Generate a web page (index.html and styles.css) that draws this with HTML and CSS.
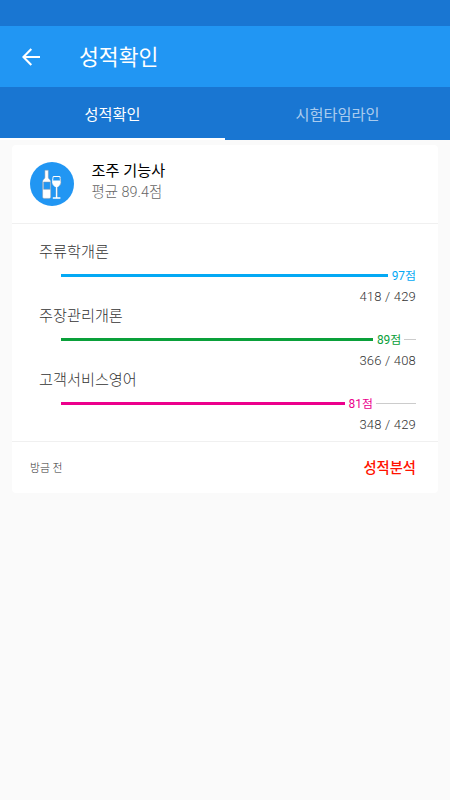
FILE: index.html
```html
<!DOCTYPE html>
<html lang="ko">
<head>
    <meta charset="UTF-8">
    <meta name="viewport" content="width=device-width, initial-scale=1.0">
    <title>성적확인</title>
    <link rel="stylesheet" href="styles.css">
</head>
<body>
    <div class="status-bar"></div>

    <header class="app-bar">
        <a href="#" class="back" aria-label="뒤로">
            <svg width="18" height="18" viewBox="0 0 18 18" fill="none" stroke="#fff" stroke-width="2.1">
                <path d="M18 9H1.5M9.3 .9L1.4 9l7.9 8.1"/>
            </svg>
        </a>
        <h1>성적확인</h1>
    </header>

    <nav class="tabs">
        <a href="#" class="tab active">성적확인</a>
        <a href="#" class="tab">시험타임라인</a>
    </nav>

    <main class="card">
        <div class="card-header">
            <svg class="badge" width="44" height="44" viewBox="0 0 44 44">
                <circle cx="22" cy="22" r="22" fill="#2196f3"/>
                <path d="M14.9 8.2h3.4v7.3c0 1.5 2.4 2 2.4 4.2v15.1c0 1-.5 1.6-1.5 1.6h-5.1c-1 0-1.5-.6-1.5-1.6V19.7c0-2.2 2.3-2.7 2.3-4.2z" fill="#fff" stroke="#8b9bab" stroke-width=".5"/>
                <path d="M13.6 20h6.6v7.3h-6.6z" fill="#2196f3" stroke="#8b9bab" stroke-width=".5"/>
                <path d="M23.2 14.5h6.7c1 5 1.2 9.8-3.4 10.1-4.5-.3-4.3-5.1-3.3-10.1z" fill="#2196f3" stroke="#fff" stroke-width="1"/>
                <path d="M22.8 18.5h7.6c.2 3.5-.7 5.9-3.9 6.1-3.2-.2-4-2.6-3.7-6.1z" fill="#fff"/>
                <path d="M26.6 24v11.4M22.8 36h7.6" fill="none" stroke="#fff" stroke-width="1.5"/>
                <path d="M27.4 25.2v9.6M30.4 16l.6 5-1.4 3" fill="none" stroke="#8b9bab" stroke-width=".5"/>
            </svg>
            <div class="exam">
                <h2>조주 기능사</h2>
                <p>평균 89.4점</p>
            </div>
        </div>

        <div class="subjects">
            <section class="subject blue">
                <h3>주류학개론</h3>
                <div class="progress">
                    <span class="reached" style="width: calc(97% - 4px)"></span>
                    <span class="score">97점</span>
                    <span class="rest"></span>
                </div>
                <p class="count">418 / 429</p>
            </section>
            <section class="subject green">
                <h3>주장관리개론</h3>
                <div class="progress">
                    <span class="reached" style="width: calc(89% - 4px)"></span>
                    <span class="score">89점</span>
                    <span class="rest"></span>
                </div>
                <p class="count">366 / 408</p>
            </section>
            <section class="subject pink">
                <h3>고객서비스영어</h3>
                <div class="progress">
                    <span class="reached" style="width: calc(81% - 4px)"></span>
                    <span class="score">81점</span>
                    <span class="rest"></span>
                </div>
                <p class="count">348 / 429</p>
            </section>
        </div>

        <footer class="card-footer">
            <span class="time">방금 전</span>
            <a href="#" class="analysis">성적분석</a>
        </footer>
    </main>
</body>
</html>
```

FILE: styles.css
```css
:root {
    --primary: #2196f3;
    --primary-dark: #1976d2;
    --background: #fafafa;
    --divider: #f0f0f0;
}

* {
    margin: 0;
    padding: 0;
    box-sizing: border-box;
}

body {
    font-family: Roboto, "Noto Sans CJK KR", sans-serif;
    background: var(--background);
    color: #212121;
    min-height: 100vh;
}

a {
    text-decoration: none;
}

.status-bar {
    height: 26px;
    background: var(--primary-dark);
}

.app-bar {
    height: 61px;
    padding-left: 22px;
    display: flex;
    align-items: center;
    background: var(--primary);
    color: #fff;
}

.back {
    display: flex;
    width: 57px;
}

.app-bar h1 {
    padding-top: 2px;
    font-size: 21.6px;
    font-weight: 400;
    line-height: 30px;
}

.tabs {
    display: flex;
    height: 53px;
    background: var(--primary-dark);
}

.tab {
    flex: 1;
    display: flex;
    align-items: center;
    justify-content: center;
    border-bottom: 2px solid transparent;
    color: rgba(255, 255, 255, 0.65);
    font-size: 15.2px;
}

.tab.active {
    color: #fff;
    border-bottom-color: #fff;
}

.card {
    margin: 5px 12px 0;
    background: #fff;
    border-radius: 4px;
}

.card-header {
    height: 79px;
    padding: 0 18px;
    display: flex;
    align-items: center;
    gap: 17.5px;
    border-bottom: 1px solid var(--divider);
}

.exam {
    padding-bottom: 4px;
}

.exam h2 {
    font-size: 15.2px;
    font-weight: 400;
    line-height: 22px;
    color: #000;
}

.exam p {
    font-size: 14.4px;
    font-weight: 300;
    line-height: 22px;
    color: #666;
}

.subjects {
    height: 218px;
    padding: 16px 22px 0 27px;
    border-bottom: 1px solid var(--divider);
}

.subject {
    height: 64px;
}

.subject h3 {
    height: 25px;
    font-size: 15.2px;
    font-weight: 300;
    line-height: 24px;
    color: #333;
}

.progress {
    height: 21px;
    margin-left: 22px;
    display: flex;
    align-items: center;
}

.reached {
    height: 3px;
    flex-shrink: 1;
    background: currentColor;
}

.score {
    flex-shrink: 0;
    margin-left: 4px;
    padding-top: 2px;
    font-size: 11.9px;
    line-height: 19px;
}

.rest {
    flex: 1;
    height: 1px;
    margin-left: 3px;
    background: #ccc;
}

/* no room left after the score */
.blue .rest {
    display: none;
}

.blue .progress {
    color: #03a9f4;
}

.green .progress {
    color: #0aa03a;
}

.pink .progress {
    color: #ec008c;
}

.count {
    padding-top: 1px;
    font-size: 13px;
    font-weight: 300;
    letter-spacing: 0.2px;
    line-height: 20px;
    text-align: right;
    color: #333;
}

.card-footer {
    height: 51px;
    padding: 0 22px 2px 18px;
    display: flex;
    align-items: center;
    justify-content: space-between;
}

.time {
    font-size: 10.8px;
    font-weight: 300;
    color: #333;
}

.analysis {
    font-size: 14.3px;
    font-weight: 500;
    color: #ff1200;
}
```
